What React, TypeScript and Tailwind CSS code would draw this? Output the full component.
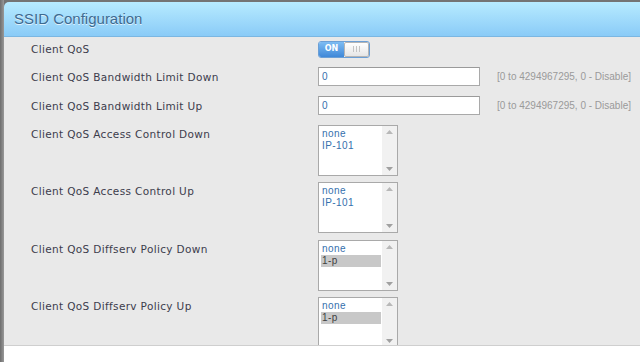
import React from "react";

const labelCls =
  "text-[10.5px] tracking-[0.35px] text-[#3c3c4c] leading-[18px] whitespace-nowrap";

function Listbox({ items, selected }: { items: string[]; selected?: number }) {
  return (
    <div className="w-[80px] h-[51px] shrink-0 border border-[#a9a9a9] bg-white flex">
      <div className="flex-1 pt-[2px] pl-[2px] pr-[1px]">
        {items.map((it, i) => (
          <div
            key={it}
            className={
              "h-[12px] leading-[12px] pl-[1px] text-[10px] tracking-[0.4px] " +
              (i === selected ? "bg-[#c8c8c8] text-[#3f3f3f]" : "text-[#3570ad]")
            }
            style={{ fontFamily: '"Liberation Sans", Arial, sans-serif' }}
          >
            {it}
          </div>
        ))}
      </div>
      <div className="w-[15px] bg-[#f1f1f1] flex flex-col items-center justify-between py-[4px]">
        <svg width="7" height="4" viewBox="0 0 7 4">
          <path d="M0 4 L3.5 0 L7 4 Z" fill="#b8b8b8" />
        </svg>
        <svg width="7" height="4" viewBox="0 0 7 4">
          <path d="M0 0 L3.5 4 L7 0 Z" fill="#a0a0a0" />
        </svg>
      </div>
    </div>
  );
}

function TextInput() {
  return (
    <div className="w-[162px] h-[19px] shrink-0 border border-[#a9a9a9] border-t-[#9a9a9a] bg-white pl-[3px] text-[10px] leading-[17px] text-[#3570ad]"
      style={{ fontFamily: '"Liberation Sans", Arial, sans-serif' }}>
      0
    </div>
  );
}

function Hint() {
  return (
    <span
      className="ml-[17px] text-[10px] text-[#9a9a9a] whitespace-nowrap"
      style={{ fontFamily: '"Liberation Sans", Arial, sans-serif' }}
    >
      [0 to 4294967295, 0 - Disable]
    </span>
  );
}

function Toggle() {
  return (
    <div className="w-[52px] h-[17px] rounded-[3px] border border-[#6b9fd6] flex overflow-hidden bg-[#f3f3f3]">
      <div
        className="w-[25px] h-full bg-gradient-to-b from-[#7dbcf3] to-[#3f88d8] text-white text-[8px] font-bold flex items-center justify-center"
        style={{ fontFamily: '"DejaVu Sans", Verdana, sans-serif' }}
      >
        ON
      </div>
      <div className="flex-1 h-full rounded-[2px] border border-[#b5b5b5] bg-gradient-to-b from-[#ffffff] to-[#e6e6e6] flex items-center justify-center gap-[2px]">
        <div className="w-[1px] h-[6px] bg-[#c4c4c4]" />
        <div className="w-[1px] h-[6px] bg-[#c4c4c4]" />
        <div className="w-[1px] h-[6px] bg-[#c4c4c4]" />
      </div>
    </div>
  );
}

function Row({
  label,
  children,
  className,
  center,
}: {
  label: string;
  children: React.ReactNode;
  className?: string;
  center?: boolean;
}) {
  return (
    <div className={"flex " + (center ? "items-center " : "items-start ") + (className ?? "")}>
      <div className={"w-[287px] shrink-0 " + labelCls}>{label}</div>
      <div className="flex items-center">{children}</div>
    </div>
  );
}

export default function App() {
  return (
    <div
      className="w-[640px] h-[362px] flex bg-[#747474] overflow-hidden"
      style={{ fontFamily: '"DejaVu Sans", Verdana, sans-serif' }}
    >
      <div className="w-[4px] shrink-0 bg-gradient-to-r from-[#6e6e6e] to-[#999999]" />
      <div className="flex-1 flex flex-col pt-[2px]">
        <div className="h-[35px] shrink-0 rounded-tl-[5px] bg-gradient-to-b from-[#b7ebff] to-[#8acbf7] border-b border-[#7bb7e2] flex items-center pl-[10px]">
          <span
            className="text-[15px] text-[#3d6a90] [text-shadow:0_1px_0_rgba(255,255,255,0.7)]"
            style={{ fontFamily: '"Liberation Sans", Arial, sans-serif' }}
          >
            SSID Configuration
          </span>
        </div>
        <div className="h-[309px] shrink-0 bg-[#e9e9e9] border-b border-[#cfcfcf] overflow-hidden pl-[27px] pt-[3px]">
          <Row label="Client QoS" center>
            <Toggle />
          </Row>
          <Row label="Client QoS Bandwidth Limit Down" className="mt-[9px]" center>
            <TextInput />
            <Hint />
          </Row>
          <Row label="Client QoS Bandwidth Limit Up" className="mt-[10px]" center>
            <TextInput />
            <Hint />
          </Row>
          <Row label="Client QoS Access Control Down" className="mt-[10px]">
            <Listbox items={["none", "IP-101"]} />
          </Row>
          <Row label="Client QoS Access Control Up" className="mt-[6px]">
            <Listbox items={["none", "IP-101"]} />
          </Row>
          <Row label="Client QoS Diffserv Policy Down" className="mt-[7px]">
            <Listbox items={["none", "1-p"]} selected={1} />
          </Row>
          <Row label="Client QoS Diffserv Policy Up" className="mt-[6px]">
            <Listbox items={["none", "1-p"]} selected={1} />
          </Row>
        </div>
        <div className="flex-1 bg-white" />
      </div>
    </div>
  );
}
